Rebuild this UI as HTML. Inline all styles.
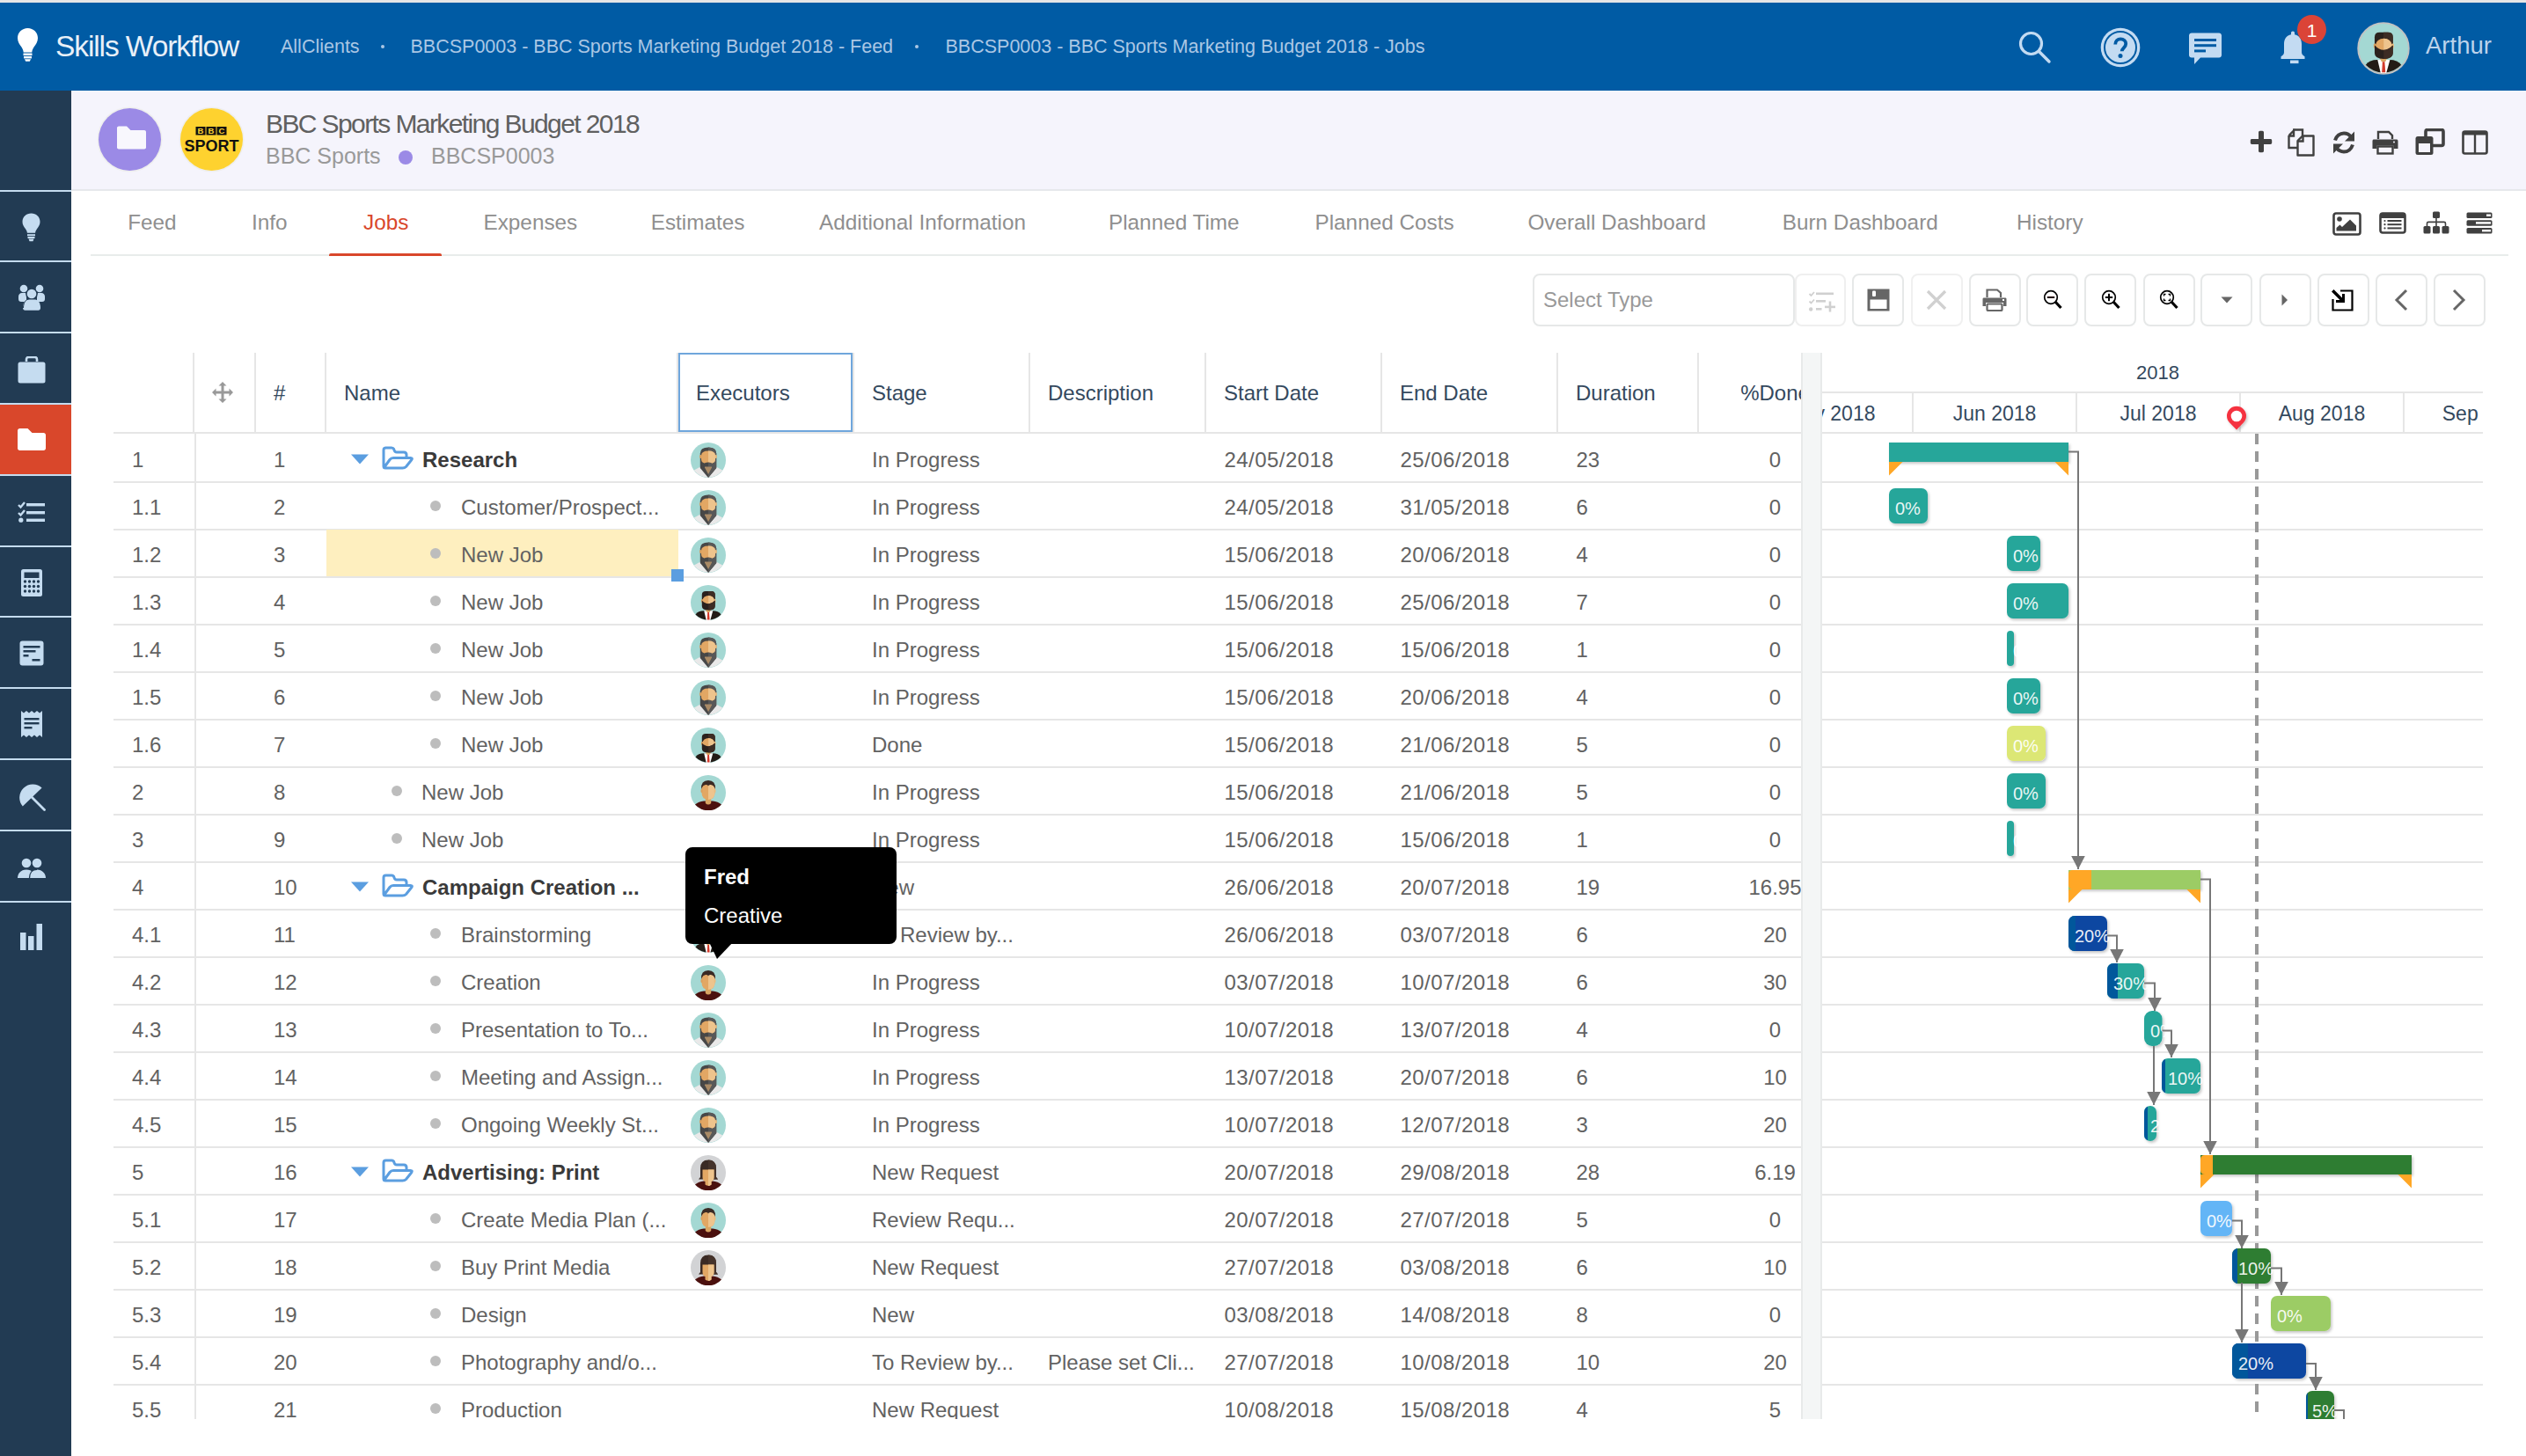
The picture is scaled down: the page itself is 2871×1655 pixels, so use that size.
<!DOCTYPE html>
<html><head><meta charset="utf-8"><title>Skills Workflow - Jobs</title>
<style>
html,body{margin:0;padding:0;}
body{width:2871px;height:1655px;overflow:hidden;position:relative;background:#fff;font-family:"Liberation Sans", sans-serif;}
.t{position:absolute;white-space:nowrap;line-height:1;}
svg{display:block;}
</style></head><body>
<div style="position:absolute;left:0px;top:0px;width:2871px;height:3px;background:#e6e6e6;"></div>
<div style="position:absolute;left:0px;top:3px;width:2871px;height:100px;background:#005ba4;"></div>
<svg style="position:absolute;left:19px;top:31px;" width="25" height="40" viewBox="0 0 25 40"><path d="M12.5 1C5.9 1 1 6 1 12.2c0 4.4 2.4 7.3 4.3 10 1.3 1.9 2.2 3.9 2.4 6.3h9.6c.2-2.4 1.1-4.4 2.4-6.3 1.9-2.7 4.3-5.6 4.3-10C24 6 19.1 1 12.5 1z" fill="#fff"/><rect x="7.5" y="29.5" width="10" height="2.6" fill="#fff"/><rect x="8" y="33" width="9" height="2.4" fill="#fff"/><path d="M9 36.2h7l-1.2 2.6h-4.6z" fill="#fff"/></svg>
<div class="t" style="left:63px;top:35.6px;font-size:33.5px;color:#e8f0f8;letter-spacing:-1.1px;">Skills Workflow</div>
<div class="t" style="left:319px;top:43.3px;font-size:21.5px;color:#abc7e4;">AllClients</div>
<div style="position:absolute;left:433px;top:51px;width:4px;height:4px;background:#abc7e4;border-radius:50%;"></div>
<div class="t" style="left:466.5px;top:43.3px;font-size:21.5px;color:#abc7e4;">BBCSP0003 - BBC Sports Marketing Budget 2018 - Feed</div>
<div style="position:absolute;left:1040px;top:51px;width:4px;height:4px;background:#abc7e4;border-radius:50%;"></div>
<div class="t" style="left:1074.5px;top:43.3px;font-size:21.5px;color:#abc7e4;">BBCSP0003 - BBC Sports Marketing Budget 2018 - Jobs</div>
<svg style="position:absolute;left:2293px;top:34px;" width="40" height="40" viewBox="0 0 40 40"><circle cx="15.5" cy="15.5" r="12" fill="none" stroke="#c3dbf2" stroke-width="3.2"/><line x1="24.5" y1="24.5" x2="36" y2="36" stroke="#c3dbf2" stroke-width="3.4" stroke-linecap="round"/></svg>
<svg style="position:absolute;left:2387px;top:31px;" width="46" height="46" viewBox="0 0 46 46"><circle cx="23" cy="23" r="22.3" fill="#c3dbf2"/><circle cx="23" cy="23" r="18" fill="none" stroke="#005ba4" stroke-width="2"/><path d="M17.2 19.5c0-3.6 2.6-6.2 6-6.2 3.5 0 6 2.4 6 5.5 0 4.3-4.5 4.6-4.5 8.5" fill="none" stroke="#005ba4" stroke-width="3.8"/><circle cx="23" cy="32.6" r="2.5" fill="#005ba4"/></svg>
<svg style="position:absolute;left:2488px;top:36px;" width="40" height="38" viewBox="0 0 40 38"><path d="M3 1.5h31c1.7 0 3 1.3 3 3v22c0 1.7-1.3 3-3 3H13l-7 7.5v-7.5H3c-1.7 0-3-1.3-3-3v-22c0-1.7 1.3-3 3-3z" fill="#c3dbf2"/><rect x="6" y="8" width="25" height="3" fill="#005ba4"/><rect x="6" y="14.2" width="25" height="3" fill="#005ba4"/><rect x="6" y="20.4" width="13" height="3" fill="#005ba4"/></svg>
<svg style="position:absolute;left:2589px;top:34px;" width="34" height="40" viewBox="0 0 34 40"><path d="M17 1.5c1.3 0 2 .8 2 2v1.7c5 1 8 5 8 10.7v9.5c0 2 1.5 3.5 3.5 4.8V33H3.5v-2.8C5.5 28.9 7 27.4 7 25.4v-9.5C7 10.2 10 6.2 15 5.2V3.5c0-1.2.7-2 2-2z" fill="#c3dbf2"/><rect x="14" y="34.5" width="9.5" height="3.6" fill="#c3dbf2"/></svg>
<div style="position:absolute;left:2611px;top:17px;width:33px;height:33px;background:#db4437;border-radius:50%;"></div>
<div class="t" style="left:2612.5px;width:30px;text-align:center;top:24.2px;font-size:21px;color:#fff;">1</div>
<div style="position:absolute;left:0px;top:103px;width:81px;height:1552px;background:#223b53;"></div>
<div style="position:absolute;left:0px;top:215.5px;width:81px;height:2px;background:#c5dcef;"></div>
<div style="position:absolute;left:0px;top:296px;width:81px;height:2px;background:#c5dcef;"></div>
<div style="position:absolute;left:0px;top:377px;width:81px;height:2px;background:#c5dcef;"></div>
<div style="position:absolute;left:0px;top:458px;width:81px;height:2px;background:#c5dcef;"></div>
<div style="position:absolute;left:0px;top:538.5px;width:81px;height:2px;background:#c5dcef;"></div>
<div style="position:absolute;left:0px;top:619.5px;width:81px;height:2px;background:#c5dcef;"></div>
<div style="position:absolute;left:0px;top:700px;width:81px;height:2px;background:#c5dcef;"></div>
<div style="position:absolute;left:0px;top:781px;width:81px;height:2px;background:#c5dcef;"></div>
<div style="position:absolute;left:0px;top:862px;width:81px;height:2px;background:#c5dcef;"></div>
<div style="position:absolute;left:0px;top:942.5px;width:81px;height:2px;background:#c5dcef;"></div>
<div style="position:absolute;left:0px;top:1023.5px;width:81px;height:2px;background:#c5dcef;"></div>
<div style="position:absolute;left:0px;top:460px;width:81px;height:78.5px;background:#d9472b;"></div>
<svg style="position:absolute;left:25px;top:242px;" width="21" height="33" viewBox="0 0 21 33"><path d="M10.5 .5C4.9.5.5 4.6.5 10c0 3.6 1.8 5.8 3.4 8 1 1.5 1.9 3 2 4.8h9.2c.1-1.8 1-3.3 2-4.8 1.6-2.2 3.4-4.4 3.4-8C20.5 4.6 16.1.5 10.5.5z" fill="#c5dcf0"/><rect x="6" y="24.2" width="9" height="2" fill="#c5dcf0"/><rect x="6.5" y="27" width="8" height="2" fill="#c5dcf0"/><path d="M7.5 29.6h6l-1 2.7h-4z" fill="#c5dcf0"/></svg>
<svg style="position:absolute;left:20px;top:323px;" width="32" height="31" viewBox="0 0 32 31"><circle cx="7" cy="5" r="4.3" fill="#c5dcf0"/><circle cx="25" cy="5" r="4.3" fill="#c5dcf0"/><path d="M1 14c0-2 1.5-4 4-4h4l1 5v5H4c-1.8 0-3-1-3-3z M31 14c0-2-1.5-4-4-4h-4l-1 5v5h6c1.8 0 3-1 3-3z" fill="#c5dcf0"/><circle cx="16" cy="11" r="6.3" fill="#223b53"/><circle cx="16" cy="11" r="5.3" fill="#c5dcf0"/><path d="M6 27c0-6 3-9.5 6-9.5h8c3 0 6 3.5 6 9.5 0 1.5-1 2.8-2.5 2.8h-15C7 29.8 6 28.5 6 27z" fill="#c5dcf0"/><path d="M6.5 27c0-6 3-9.8 6-9.8" fill="none" stroke="#223b53" stroke-width="1"/></svg>
<svg style="position:absolute;left:20px;top:405px;" width="32" height="31" viewBox="0 0 32 31"><path d="M10 6V3.5C10 2 11 1 12.5 1h7C21 1 22 2 22 3.5V6" fill="none" stroke="#c5dcf0" stroke-width="2.6"/><rect x="0.5" y="6.5" width="31" height="24" rx="2.5" fill="#c5dcf0"/></svg>
<svg style="position:absolute;left:20px;top:486px;" width="32" height="27" viewBox="0 0 32 27"><path d="M2.5 1h9l5 5h13c1.4 0 2.5 1.1 2.5 2.5v15c0 1.4-1.1 2.5-2.5 2.5h-27C1.1 26 0 24.9 0 23.5v-20C0 2.1 1.1 1 2.5 1z" fill="#fff"/></svg>
<svg style="position:absolute;left:20px;top:569px;" width="32" height="26" viewBox="0 0 32 26"><path d="M1 5l2.5 2.5L8 2" fill="none" stroke="#c5dcf0" stroke-width="2.4"/><path d="M1 14l2.5 2.5L8 11" fill="none" stroke="#c5dcf0" stroke-width="2.4"/><circle cx="3.8" cy="22.2" r="2.6" fill="#c5dcf0"/><rect x="10" y="3" width="21" height="3.4" fill="#c5dcf0"/><rect x="10" y="12" width="21" height="3.4" fill="#c5dcf0"/><rect x="10" y="20.6" width="21" height="3.4" fill="#c5dcf0"/></svg>
<svg style="position:absolute;left:23px;top:646px;" width="26" height="33" viewBox="0 0 26 33"><rect x="1" y="1" width="24" height="31" rx="2.5" fill="#c5dcf0"/><rect x="4.5" y="4.5" width="17" height="6.5" fill="#223b53"/><circle cx="5.5" cy="15.0" r="1.7" fill="#223b53"/><circle cx="10.5" cy="15.0" r="1.7" fill="#223b53"/><circle cx="15.5" cy="15.0" r="1.7" fill="#223b53"/><circle cx="20.5" cy="15.0" r="1.7" fill="#223b53"/><circle cx="5.5" cy="20.5" r="1.7" fill="#223b53"/><circle cx="10.5" cy="20.5" r="1.7" fill="#223b53"/><circle cx="15.5" cy="20.5" r="1.7" fill="#223b53"/><circle cx="20.5" cy="20.5" r="1.7" fill="#223b53"/><circle cx="5.5" cy="26.0" r="1.7" fill="#223b53"/><circle cx="10.5" cy="26.0" r="1.7" fill="#223b53"/><circle cx="15.5" cy="26.0" r="1.7" fill="#223b53"/><circle cx="20.5" cy="26.0" r="1.7" fill="#223b53"/></svg>
<svg style="position:absolute;left:22px;top:728px;" width="28" height="29" viewBox="0 0 28 29"><rect x="0.5" y="0.5" width="27" height="28" rx="3" fill="#c5dcf0"/><rect x="4.5" y="6" width="19" height="2.5" fill="#223b53"/><rect x="4.5" y="11" width="14" height="2.5" fill="#223b53"/><rect x="4.5" y="16" width="6" height="2.5" fill="#223b53"/><rect x="14.5" y="21" width="9" height="2.5" fill="#223b53"/></svg>
<svg style="position:absolute;left:23px;top:807px;" width="26" height="32" viewBox="0 0 26 32"><path d="M1 1l3 2.5 3-2.5 3 2.5 3-2.5 3 2.5 3-2.5 3 2.5 3-2.5V31l-3-2.5-3 2.5-3-2.5-3 2.5-3-2.5-3 2.5-3-2.5-3 2.5z" fill="#c5dcf0"/><rect x="4.5" y="9" width="17" height="2.4" fill="#223b53"/><rect x="4.5" y="14" width="17" height="2.4" fill="#223b53"/><rect x="4.5" y="19" width="9" height="2.4" fill="#223b53"/></svg>
<svg style="position:absolute;left:20px;top:890px;" width="32" height="32" viewBox="0 0 32 32"><path d="M27.6 5.5A15.2 15.2 0 0 0 5.8 26.6Z" fill="#c5dcf0"/><line x1="16" y1="16" x2="30.5" y2="30.5" stroke="#c5dcf0" stroke-width="2.8" stroke-linecap="round"/></svg>
<svg style="position:absolute;left:20px;top:975px;" width="32" height="24" viewBox="0 0 32 24"><circle cx="10" cy="6" r="5.3" fill="#c5dcf0"/><circle cx="22" cy="6" r="5.3" fill="#c5dcf0"/><path d="M0 23c0-5 3.5-9.5 10-9.5S20 18 20 23z" fill="#c5dcf0"/><path d="M14 23c0-5 2-9.5 8-9.5s10 4.5 10 9.5z" fill="#c5dcf0"/><path d="M13.5 23c0-5 2.5-9.6 8.5-9.6" fill="none" stroke="#223b53" stroke-width="1.3"/></svg>
<svg style="position:absolute;left:23px;top:1050px;" width="26" height="30" viewBox="0 0 26 30"><rect x="0" y="10" width="6.5" height="20" fill="#c5dcf0"/><rect x="9" y="14" width="6.5" height="16" fill="#c5dcf0"/><rect x="18.5" y="0" width="6.5" height="30" fill="#c5dcf0"/></svg>
<div style="position:absolute;left:81px;top:103px;width:2790px;height:112px;background:#f5f4fc;"></div>
<div style="position:absolute;left:81px;top:215px;width:2790px;height:2px;background:#e6e8ec;"></div>
<div style="position:absolute;left:112px;top:122.5px;width:71px;height:71px;background:#9b8ae6;border-radius:50%;box-shadow:0 0 0 1.5px #eeeeee;"></div>
<svg style="position:absolute;left:132.5px;top:142.5px;" width="33" height="27" viewBox="0 0 33 27"><path d="M2 .5h9l4.5 4.5H31c1.1 0 2 .9 2 2v17.5c0 1.1-.9 2-2 2H2c-1.1 0-2-.9-2-2v-22C0 1.4.9.5 2 .5z" fill="#f8f7fd"/></svg>
<div style="position:absolute;left:204.5px;top:122.5px;width:71px;height:71px;background:#fed22f;border-radius:50%;box-shadow:0 0 0 1.5px #eeeeee;"></div>
<svg style="position:absolute;left:206px;top:140px;" width="70" height="36" viewBox="0 0 70 36"><rect x="16.5" y="4" width="11" height="9.5" fill="#111"/><rect x="28.5" y="4" width="11" height="9.5" fill="#111"/><rect x="40.5" y="4" width="11" height="9.5" fill="#111"/><text x="22" y="12.4" font-family="Liberation Sans" font-weight="700" font-size="9.5" fill="#fed22f" text-anchor="middle">B</text><text x="34" y="12.4" font-family="Liberation Sans" font-weight="700" font-size="9.5" fill="#fed22f" text-anchor="middle">B</text><text x="46" y="12.4" font-family="Liberation Sans" font-weight="700" font-size="9.5" fill="#fed22f" text-anchor="middle">C</text><text x="34.5" y="32" font-family="Liberation Sans" font-weight="700" font-size="18" fill="#111" text-anchor="middle">SPORT</text></svg>
<div class="t" style="left:302px;top:125.9px;font-size:30px;color:#606060;letter-spacing:-1.6px;">BBC Sports Marketing Budget 2018</div>
<div class="t" style="left:302px;top:165.2px;font-size:25px;color:#999;">BBC Sports</div>
<div style="position:absolute;left:453px;top:171px;width:16px;height:16px;background:#9b8ae6;border-radius:50%;"></div>
<div class="t" style="left:490px;top:165.2px;font-size:25px;color:#999;">BBCSP0003</div>
<svg style="position:absolute;left:2557px;top:148px;" width="26" height="26" viewBox="0 0 26 26"><path d="M10 2.5c0-1 .7-1.7 1.7-1.7h2.6c1 0 1.7.7 1.7 1.7V10h7.5c1 0 1.7.7 1.7 1.7v2.6c0 1-.7 1.7-1.7 1.7H16v7.5c0 1-.7 1.7-1.7 1.7h-2.6c-1 0-1.7-.7-1.7-1.7V16H2.5C1.5 16 .8 15.3.8 14.3v-2.6c0-1 .7-1.7 1.7-1.7H10z" fill="#404040"/></svg>
<svg style="position:absolute;left:2600px;top:146px;" width="33" height="32" viewBox="0 0 33 32"><path d="M6 1.5h11v6.5 M17 1.5v0 M1.5 8L7 2.5v6h-5.5 M1.5 8v14h10" fill="none" stroke="#404040" stroke-width="2.4"/><path d="M11.5 14L17 8.5h12.5v22h-18z" fill="none" stroke="#404040" stroke-width="2.4" stroke-linejoin="round"/><path d="M11.5 14.5h6v-6" fill="none" stroke="#404040" stroke-width="2.4"/></svg>
<svg style="position:absolute;left:2650px;top:148px;" width="28" height="28" viewBox="0 0 28 28"><path d="M4 11.5C5.5 6.5 9.5 3.5 14 3.5c3.5 0 6.5 1.7 8.3 4.3" fill="none" stroke="#404040" stroke-width="4"/><path d="M26 1.5v11h-11z" fill="#404040"/><path d="M24 16.5C22.5 21.5 18.5 24.5 14 24.5c-3.5 0-6.5-1.7-8.3-4.3" fill="none" stroke="#404040" stroke-width="4"/><path d="M2 26.5v-11h11z" fill="#404040"/></svg>
<svg style="position:absolute;left:2696px;top:148px;" width="30" height="28" viewBox="0 0 30 28"><path d="M7 10V2h12l4 4v4" fill="none" stroke="#404040" stroke-width="2.4"/><path d="M2.5 10.5h25c1.4 0 2 .6 2 2V21h-5v-3.5h-19V21h-5v-8.5c0-1.4.6-2 2-2z" fill="#404040"/><rect x="6.5" y="18.5" width="17" height="8" fill="none" stroke="#404040" stroke-width="2.4"/><circle cx="25" cy="13.5" r="1" fill="#f5f4fc"/></svg>
<svg style="position:absolute;left:2744px;top:146px;" width="36" height="32" viewBox="0 0 36 32"><rect x="13" y="1.5" width="20" height="18" rx="2" fill="none" stroke="#404040" stroke-width="3.6"/><rect x="1.5" y="9" width="20" height="21" rx="2.5" fill="#404040"/><rect x="5" y="17" width="13" height="10" fill="#f5f4fc"/></svg>
<svg style="position:absolute;left:2798px;top:148px;" width="30" height="28" viewBox="0 0 30 28"><rect x="1.5" y="1.5" width="27" height="25" rx="2" fill="none" stroke="#404040" stroke-width="2.6"/><rect x="1.5" y="1.5" width="27" height="4" fill="#404040"/><line x1="15" y1="3" x2="15" y2="26" stroke="#404040" stroke-width="2.4"/></svg>
<div style="position:absolute;left:103px;top:289px;width:2748px;height:2px;background:#e8eceb;"></div>
<div class="t" style="left:145.2px;top:240.6px;font-size:24.3px;color:#8f8f8f;">Feed</div>
<div class="t" style="left:286px;top:240.6px;font-size:24.3px;color:#8f8f8f;">Info</div>
<div class="t" style="left:413px;top:240.6px;font-size:24.3px;color:#d9472b;">Jobs</div>
<div class="t" style="left:549.5px;top:240.6px;font-size:24.3px;color:#8f8f8f;">Expenses</div>
<div class="t" style="left:739.7px;top:240.6px;font-size:24.3px;color:#8f8f8f;">Estimates</div>
<div class="t" style="left:931px;top:240.6px;font-size:24.3px;color:#8f8f8f;">Additional Information</div>
<div class="t" style="left:1260px;top:240.6px;font-size:24.3px;color:#8f8f8f;">Planned Time</div>
<div class="t" style="left:1494.5px;top:240.6px;font-size:24.3px;color:#8f8f8f;">Planned Costs</div>
<div class="t" style="left:1736.4px;top:240.6px;font-size:24.3px;color:#8f8f8f;">Overall Dashboard</div>
<div class="t" style="left:2025.8px;top:240.6px;font-size:24.3px;color:#8f8f8f;">Burn Dashboard</div>
<div class="t" style="left:2292px;top:240.6px;font-size:24.3px;color:#8f8f8f;">History</div>
<div style="position:absolute;left:374px;top:288px;width:128px;height:3px;background:#d9472b;border-radius:2px 2px 0 0;"></div>
<svg style="position:absolute;left:2651px;top:241px;" width="33" height="27" viewBox="0 0 33 27"><rect x="1.5" y="1.5" width="30" height="24" rx="2.5" fill="none" stroke="#404040" stroke-width="2.6"/><circle cx="8" cy="8" r="2.8" fill="#404040"/><path d="M4.5 21.5v-3.5l4-3.5 2.5 2.5 9-8.5 7 7v6z" fill="#404040"/></svg>
<svg style="position:absolute;left:2704px;top:241px;" width="31" height="25" viewBox="0 0 31 25"><rect x="1.5" y="1.5" width="28" height="22" rx="2.5" fill="none" stroke="#404040" stroke-width="2.6"/><rect x="1.5" y="1.5" width="28" height="5.5" fill="#404040"/><circle cx="6.5" cy="10.0" r="1.1" fill="#404040"/><rect x="9.5" y="9.0" width="16" height="2" fill="#404040"/><circle cx="6.5" cy="14.2" r="1.1" fill="#404040"/><rect x="9.5" y="13.2" width="16" height="2" fill="#404040"/><circle cx="6.5" cy="18.4" r="1.1" fill="#404040"/><rect x="9.5" y="17.4" width="16" height="2" fill="#404040"/></svg>
<svg style="position:absolute;left:2754px;top:240px;" width="30" height="26" viewBox="0 0 30 26"><rect x="11" y="0.5" width="8" height="7.5" rx="1.5" fill="#404040"/><rect x="0.5" y="17" width="8" height="8.5" rx="1.5" fill="#404040"/><rect x="11" y="17" width="8" height="8.5" rx="1.5" fill="#404040"/><rect x="21.5" y="17" width="8" height="8.5" rx="1.5" fill="#404040"/><path d="M15 8v9 M4.5 17v-3c0-1 .6-1.6 1.6-1.6h17.8c1 0 1.6.6 1.6 1.6v3" fill="none" stroke="#404040" stroke-width="1.6"/></svg>
<svg style="position:absolute;left:2803px;top:241px;" width="30" height="25" viewBox="0 0 30 25"><rect x="0.5" y="0.5" width="29" height="6.5" rx="1.5" fill="#404040"/><rect x="0.5" y="9.2" width="29" height="6.5" rx="1.5" fill="#404040"/><rect x="0.5" y="18" width="29" height="6.5" rx="1.5" fill="#404040"/><rect x="23" y="2.5" width="5" height="2.4" fill="#fff"/><rect x="11" y="11.2" width="17" height="2.4" fill="#fff"/><rect x="18" y="20" width="10" height="2.4" fill="#fff"/></svg>
<div style="position:absolute;left:1742px;top:311px;width:298px;height:60px;background:#fff;box-sizing:border-box;border:2px solid #e6e8e8;border-radius:8px;"></div>
<div class="t" style="left:1754px;top:328.7px;font-size:24px;color:#999;">Select Type</div>
<div style="position:absolute;left:2040px;top:311px;width:58px;height:60px;background:#fff;box-sizing:border-box;border:2px solid #efefef;border-radius:8px;"></div>
<svg style="position:absolute;left:2055px;top:330px;" width="32" height="25" viewBox="0 0 32 25"><path d="M1.5 4l2 2 3.5-4" fill="none" stroke="#d0d0d0" stroke-width="1.8"/><path d="M1.5 12.5l2 2 3.5-4" fill="none" stroke="#d0d0d0" stroke-width="1.8"/><circle cx="3.2" cy="21.5" r="2.2" fill="#d0d0d0"/><rect x="9" y="2.5" width="20" height="2.6" fill="#d0d0d0"/><rect x="9" y="11" width="11" height="2.6" fill="#d0d0d0"/><rect x="9" y="20" width="6.5" height="2.6" fill="#d0d0d0"/><rect x="19" y="17.6" width="12" height="2.6" fill="#d0d0d0"/><rect x="23.7" y="12.5" width="2.6" height="12" fill="#d0d0d0"/></svg>
<div style="position:absolute;left:2105px;top:311px;width:59px;height:60px;background:#fff;box-sizing:border-box;border:2px solid #e6e8e8;border-radius:8px;"></div>
<div style="position:absolute;left:2172px;top:311px;width:59px;height:60px;background:#fff;box-sizing:border-box;border:2px solid #f0f0f0;border-radius:8px;"></div>
<div style="position:absolute;left:2238px;top:311px;width:59px;height:60px;background:#fff;box-sizing:border-box;border:2px solid #e6e8e8;border-radius:8px;"></div>
<div style="position:absolute;left:2303px;top:311px;width:59px;height:60px;background:#fff;box-sizing:border-box;border:2px solid #e6e8e8;border-radius:8px;"></div>
<div style="position:absolute;left:2369px;top:311px;width:59px;height:60px;background:#fff;box-sizing:border-box;border:2px solid #e6e8e8;border-radius:8px;"></div>
<div style="position:absolute;left:2436px;top:311px;width:59px;height:60px;background:#fff;box-sizing:border-box;border:2px solid #e6e8e8;border-radius:8px;"></div>
<div style="position:absolute;left:2501px;top:311px;width:59px;height:60px;background:#fff;box-sizing:border-box;border:2px solid #e6e8e8;border-radius:8px;"></div>
<div style="position:absolute;left:2568px;top:311px;width:59px;height:60px;background:#fff;box-sizing:border-box;border:2px solid #e6e8e8;border-radius:8px;"></div>
<div style="position:absolute;left:2634px;top:311px;width:59px;height:60px;background:#fff;box-sizing:border-box;border:2px solid #e6e8e8;border-radius:8px;"></div>
<div style="position:absolute;left:2700px;top:311px;width:59px;height:60px;background:#fff;box-sizing:border-box;border:2px solid #e6e8e8;border-radius:8px;"></div>
<div style="position:absolute;left:2766px;top:311px;width:59px;height:60px;background:#fff;box-sizing:border-box;border:2px solid #e6e8e8;border-radius:8px;"></div>
<svg style="position:absolute;left:2122px;top:328px;" width="26" height="26" viewBox="0 0 26 26"><rect x="0.5" y="0.5" width="25" height="25" fill="#666"/><rect x="3.5" y="12.5" width="19" height="10.5" fill="#fff"/><rect x="6" y="2.5" width="4" height="6.5" rx="1.2" fill="#fff"/></svg>
<svg style="position:absolute;left:2189px;top:329px;" width="24" height="24" viewBox="0 0 24 24"><path d="M2 2l20 20M22 2L2 22" stroke="#d0d0d0" stroke-width="3.2"/></svg>
<svg style="position:absolute;left:2253px;top:328px;" width="28" height="26" viewBox="0 0 28 26"><path d="M5.5 10V1.5h11.5l4 3.5V10" fill="none" stroke="#666" stroke-width="2.2"/><path d="M2 10.5h24c1 0 1.5.5 1.5 1.5V20h-3.5v-4h-20v4H.5v-8c0-1 .5-1.5 1.5-1.5z" fill="#666"/><rect x="5.5" y="17.5" width="17" height="7.5" rx="1" fill="none" stroke="#666" stroke-width="2.2"/><rect x="23" y="12" width="2" height="2" fill="#fff"/></svg>
<svg style="position:absolute;left:2320.5px;top:327px;" width="24" height="26" viewBox="0 0 24 26"><circle cx="10" cy="11" r="7.3" fill="none" stroke="#000" stroke-width="1.7"/><line x1="15" y1="16" x2="21.5" y2="23" stroke="#000" stroke-width="3.2"/><rect x="5.8" y="10" width="8.4" height="2" fill="#200"/></svg>
<svg style="position:absolute;left:2386.5px;top:327px;" width="24" height="26" viewBox="0 0 24 26"><circle cx="10" cy="11" r="7.3" fill="none" stroke="#000" stroke-width="1.7"/><line x1="15" y1="16" x2="21.5" y2="23" stroke="#000" stroke-width="3.2"/><rect x="5.8" y="10" width="8.4" height="2" fill="#000"/><rect x="9" y="6.8" width="2" height="8.4" fill="#000"/></svg>
<svg style="position:absolute;left:2452.5px;top:327px;" width="24" height="26" viewBox="0 0 24 26"><circle cx="10" cy="11" r="7.3" fill="none" stroke="#000" stroke-width="1.7"/><line x1="15" y1="16" x2="21.5" y2="23" stroke="#000" stroke-width="3.2"/><path d="M6.5 9.5V7.5h2 M11.5 7.5h2v2 M13.5 12.5v2h-2 M8.5 14.5h-2v-2" fill="none" stroke="#000" stroke-width="1.3"/></svg>
<svg style="position:absolute;left:2524px;top:337px;" width="14" height="8" viewBox="0 0 14 8"><path d="M0.5 0.5h13L7 7.5z" fill="#666"/></svg>
<svg style="position:absolute;left:2593px;top:334px;" width="8" height="14" viewBox="0 0 8 14"><path d="M0.5 0.5v13L7 7z" fill="#666"/></svg>
<svg style="position:absolute;left:2649px;top:328px;" width="28" height="26" viewBox="0 0 28 26"><path d="M11 2.5h13.5v22h-22V12" fill="none" stroke="#000" stroke-width="2.2"/><path d="M1 3.5L3.5 1l9.5 9.5V6h3v10H6v-3h4.5z" fill="#000"/></svg>
<svg style="position:absolute;left:2720px;top:328px;" width="18" height="26" viewBox="0 0 18 26"><path d="M15 2L4 13l11 11" fill="none" stroke="#666" stroke-width="3"/></svg>
<svg style="position:absolute;left:2786px;top:328px;" width="18" height="26" viewBox="0 0 18 26"><path d="M3 2l11 11L3 24" fill="none" stroke="#666" stroke-width="3"/></svg>
<svg width="0" height="0" style="position:absolute"><defs>
<symbol id="avA" viewBox="0 0 40 40"><circle cx="20" cy="20" r="20" fill="#a4d8d3"/>
<path d="M3.8 31.5L12 27H28L36.2 31.5A20 20 0 0 1 3.8 31.5z" fill="#e9e9e9"/>
<path d="M10.8 12.5Q10.8 5.5 20 5.5Q29.2 5.5 29.2 12.5V29L20 40L10.8 29z" fill="#474747"/>
<path d="M20 5.5Q29.2 5.5 29.2 12.5V29L20 40z" fill="#585858"/>
<path d="M12 15Q12 9.5 20 9.5Q28 9.5 28 15V19Q28 22.5 24.5 23.5Q20 21.5 15.5 23.5Q12 22.5 12 19z" fill="#e2a764"/>
<path d="M20 9.5Q28 9.5 28 15V19Q28 22.5 24.5 23.5Q22 22 20 22z" fill="#eec48d"/>
<rect x="10.2" y="14" width="2" height="4" rx="1" fill="#d9a060"/><rect x="27.8" y="14" width="2" height="4" rx="1" fill="#e9bb80"/>
<path d="M16 28.5L20 36L24 28.5V27.5H16z" fill="#a98a66"/>
</symbol>
<symbol id="avB" viewBox="0 0 40 40"><circle cx="20" cy="20" r="20" fill="#a4d8d3"/>
<path d="M5.5 33.5Q8.5 29.3 15 29.3H25Q31.5 29.3 34.5 33.5A20 20 0 0 1 5.5 33.5z" fill="#231b16"/>
<path d="M15.2 29.3H25.3L22.3 40H17.7z" fill="#fff"/><path d="M16.5 27H23.5L21.5 31H18.5z" fill="#d9a563"/><path d="M19.2 31H21L21.6 39.5H18.7z" fill="#d33a2c"/>
<path d="M12.8 19V10.8Q12.8 7 17 7H23.5Q27.7 7 27.7 10.8V19z" fill="#2a211d"/><path d="M20 7H23.5Q27.7 7 27.7 10.8V19H20z" fill="#3d2c24"/>
<rect x="12" y="16" width="2" height="4" rx="1" fill="#d9a060"/><rect x="26.5" y="16" width="2" height="4" rx="1" fill="#e9bb80"/>
<ellipse cx="20.2" cy="17.3" rx="6.6" ry="5.3" fill="#e2a764"/>
<path d="M20.2 12A6.6 5.3 0 0 1 20.2 22.6z" fill="#eec48d"/>
<path d="M12.8 17.5Q20 25 27.7 17.5V24Q27.7 28.6 20.2 28.6Q12.8 28.6 12.8 24z" fill="#2a211d"/><path d="M20.2 21.5Q24.5 21 27.7 17.5V24Q27.7 28.6 20.2 28.6z" fill="#3d2c24"/>
</symbol>
<symbol id="avC" viewBox="0 0 40 40"><circle cx="20" cy="20" r="20" fill="#a4d8d3"/>
<path d="M5 33.5Q9 30 15 29.5H25Q31 30 35 33.5A20 20 0 0 1 5 33.5z" fill="#4b100e"/>
<path d="M16.8 25H23.2V32Q20 35 16.8 32z" fill="#d9a563"/>
<path d="M12.5 14Q12.5 9 20 9Q27.5 9 27.5 14V20Q27.5 27.5 20 28Q12.5 27.5 12.5 20z" fill="#e2a764"/>
<path d="M20 9Q27.5 9 27.5 14V20Q27.5 27.5 20 28z" fill="#eec48d"/>
<rect x="11.5" y="16" width="2" height="4" rx="1" fill="#d9a060"/><rect x="26.5" y="16" width="2" height="4" rx="1" fill="#e9bb80"/>
<path d="M12 16Q11.5 6 20 6Q28.5 6 28 16L27 14Q26 11.5 23 11Q20.5 10.5 20 12.5Q19.5 10.5 17 11Q14 11.5 13 14z" fill="#3a2a24"/>
</symbol>
<symbol id="avD" viewBox="0 0 40 40"><circle cx="20" cy="20" r="20" fill="#d2d3d5"/>
<path d="M11 15Q11 5.5 20 5.5Q29 5.5 29 15V25L31 27.5H9L11 25z" fill="#3a2a24"/>
<path d="M20 5.5Q29 5.5 29 15V25L31 27.5H20z" fill="#45332b"/>
<path d="M5 33.5Q9 30 15 29.5H25Q31 30 35 33.5A20 20 0 0 1 5 33.5z" fill="#4b100e"/>
<path d="M13.5 16.5H26.5V25Q26.5 29 23.5 30V33.5Q20 36 16.5 33.5V30Q13.5 29 13.5 25z" fill="#e2a764"/>
<path d="M20 16.5H26.5V25Q26.5 29 23.5 30V33.5Q21.8 35 20 35z" fill="#eec48d"/>
</symbol>
</defs></svg>
<div style="position:absolute;left:219px;top:401px;width:2px;height:90px;background:#e6e6e6;"></div>
<div style="position:absolute;left:289px;top:401px;width:2px;height:90px;background:#e6e6e6;"></div>
<div style="position:absolute;left:369px;top:401px;width:2px;height:90px;background:#e6e6e6;"></div>
<div style="position:absolute;left:769px;top:401px;width:2px;height:90px;background:#e6e6e6;"></div>
<div style="position:absolute;left:969px;top:401px;width:2px;height:90px;background:#e6e6e6;"></div>
<div style="position:absolute;left:1169px;top:401px;width:2px;height:90px;background:#e6e6e6;"></div>
<div style="position:absolute;left:1369px;top:401px;width:2px;height:90px;background:#e6e6e6;"></div>
<div style="position:absolute;left:1569px;top:401px;width:2px;height:90px;background:#e6e6e6;"></div>
<div style="position:absolute;left:1769px;top:401px;width:2px;height:90px;background:#e6e6e6;"></div>
<div style="position:absolute;left:1929px;top:401px;width:2px;height:90px;background:#e6e6e6;"></div>
<div style="position:absolute;left:129px;top:491px;width:1918px;height:2px;background:#e6e6e6;"></div>
<svg style="position:absolute;left:241px;top:434px;" width="24" height="24" viewBox="0 0 24 24"><path d="M12 0l4.5 4.5h-3v6h6v-3L24 12l-4.5 4.5v-3h-6v6h3L12 24l-4.5-4.5h3v-6h-6v3L0 12l4.5-4.5v3h6v-6h-3z" fill="#999"/></svg>
<div class="t" style="left:311px;top:434.7px;font-size:24px;color:#34495e;">#</div>
<div class="t" style="left:391px;top:434.7px;font-size:24px;color:#34495e;">Name</div>
<div style="position:absolute;left:771px;top:401px;width:198px;height:90px;background:transparent;box-sizing:border-box;border:2px solid #6fa6dc;"></div>
<div class="t" style="left:791px;top:434.7px;font-size:24px;color:#34495e;">Executors</div>
<div class="t" style="left:991px;top:434.7px;font-size:24px;color:#34495e;">Stage</div>
<div class="t" style="left:1191px;top:434.7px;font-size:24px;color:#34495e;">Description</div>
<div class="t" style="left:1391px;top:434.7px;font-size:24px;color:#34495e;">Start Date</div>
<div class="t" style="left:1591px;top:434.7px;font-size:24px;color:#34495e;">End Date</div>
<div class="t" style="left:1791px;top:434.7px;font-size:24px;color:#34495e;">Duration</div>
<div style="position:absolute;left:129px;top:493px;width:1918px;height:1120px;overflow:hidden;">
<div style="position:absolute;left:0px;top:54px;width:1918px;height:2px;background:#e6e6e6;"></div>
<div class="t" style="left:21px;top:17.7px;font-size:24px;color:#626262;">1</div>
<div class="t" style="left:182px;top:17.7px;font-size:24px;color:#626262;">1</div>
<svg style="position:absolute;left:270px;top:23px" width="20" height="12"><path d="M0 0.5h20L10 11.5z" fill="#5b9ee0"/></svg>
<svg style="position:absolute;left:304px;top:13px" width="38" height="29"><path d="M3 24V5.5Q3 3 5.5 3H12Q14.5 3 15 5.5Q15.5 8 18 8H26Q29 8 29 11V14 M3.5 25.5L10 16.5Q11.5 14.5 14 14.5H33.5Q36.5 14.5 34.5 17L28.5 24.5Q27 26 24.5 26H5Q3 26 3 24" fill="none" stroke="#5b9ee0" stroke-width="3" stroke-linejoin="round" stroke-linecap="round"/></svg>
<div class="t" style="left:351px;top:17.7px;font-size:24px;color:#3a3a3a;font-weight:700;">Research</div>
<svg style="position:absolute;left:656px;top:10px" width="40" height="40"><use href="#avA"/></svg>
<div class="t" style="left:862px;top:17.7px;font-size:24px;color:#626262;">In Progress</div>
<div class="t" style="left:1262.5px;top:17.7px;font-size:24px;color:#626262;letter-spacing:0.45px;">24/05/2018</div>
<div class="t" style="left:1462.5px;top:17.7px;font-size:24px;color:#626262;letter-spacing:0.45px;">25/06/2018</div>
<div class="t" style="left:1662.5px;top:17.7px;font-size:24px;color:#626262;">23</div>
<div class="t" style="left:1828.5px;width:120px;text-align:center;top:17.7px;font-size:24px;color:#626262;">0</div>
<div style="position:absolute;left:0px;top:108px;width:1918px;height:2px;background:#e6e6e6;"></div>
<div class="t" style="left:21px;top:71.7px;font-size:24px;color:#626262;">1.1</div>
<div class="t" style="left:182px;top:71.7px;font-size:24px;color:#626262;">2</div>
<div style="position:absolute;left:360px;top:76px;width:12px;height:12px;background:#bdbdbd;border-radius:50%;"></div>
<div class="t" style="left:395px;top:71.7px;font-size:24px;color:#626262;">Customer/Prospect...</div>
<svg style="position:absolute;left:656px;top:64px" width="40" height="40"><use href="#avA"/></svg>
<div class="t" style="left:862px;top:71.7px;font-size:24px;color:#626262;">In Progress</div>
<div class="t" style="left:1262.5px;top:71.7px;font-size:24px;color:#626262;letter-spacing:0.45px;">24/05/2018</div>
<div class="t" style="left:1462.5px;top:71.7px;font-size:24px;color:#626262;letter-spacing:0.45px;">31/05/2018</div>
<div class="t" style="left:1662.5px;top:71.7px;font-size:24px;color:#626262;">6</div>
<div class="t" style="left:1828.5px;width:120px;text-align:center;top:71.7px;font-size:24px;color:#626262;">0</div>
<div style="position:absolute;left:242px;top:109px;width:400px;height:53px;background:#feefbf;"></div>
<div style="position:absolute;left:0px;top:162px;width:1918px;height:2px;background:#e6e6e6;"></div>
<div class="t" style="left:21px;top:125.7px;font-size:24px;color:#626262;">1.2</div>
<div class="t" style="left:182px;top:125.7px;font-size:24px;color:#626262;">3</div>
<div style="position:absolute;left:360px;top:130px;width:12px;height:12px;background:#bdbdbd;border-radius:50%;"></div>
<div class="t" style="left:395px;top:125.7px;font-size:24px;color:#626262;">New Job</div>
<svg style="position:absolute;left:656px;top:118px" width="40" height="40"><use href="#avA"/></svg>
<div class="t" style="left:862px;top:125.7px;font-size:24px;color:#626262;">In Progress</div>
<div class="t" style="left:1262.5px;top:125.7px;font-size:24px;color:#626262;letter-spacing:0.45px;">15/06/2018</div>
<div class="t" style="left:1462.5px;top:125.7px;font-size:24px;color:#626262;letter-spacing:0.45px;">20/06/2018</div>
<div class="t" style="left:1662.5px;top:125.7px;font-size:24px;color:#626262;">4</div>
<div class="t" style="left:1828.5px;width:120px;text-align:center;top:125.7px;font-size:24px;color:#626262;">0</div>
<div style="position:absolute;left:634px;top:154px;width:14px;height:14px;background:#5b9ee0;"></div>
<div style="position:absolute;left:0px;top:216px;width:1918px;height:2px;background:#e6e6e6;"></div>
<div class="t" style="left:21px;top:179.7px;font-size:24px;color:#626262;">1.3</div>
<div class="t" style="left:182px;top:179.7px;font-size:24px;color:#626262;">4</div>
<div style="position:absolute;left:360px;top:184px;width:12px;height:12px;background:#bdbdbd;border-radius:50%;"></div>
<div class="t" style="left:395px;top:179.7px;font-size:24px;color:#626262;">New Job</div>
<svg style="position:absolute;left:656px;top:172px" width="40" height="40"><use href="#avB"/></svg>
<div class="t" style="left:862px;top:179.7px;font-size:24px;color:#626262;">In Progress</div>
<div class="t" style="left:1262.5px;top:179.7px;font-size:24px;color:#626262;letter-spacing:0.45px;">15/06/2018</div>
<div class="t" style="left:1462.5px;top:179.7px;font-size:24px;color:#626262;letter-spacing:0.45px;">25/06/2018</div>
<div class="t" style="left:1662.5px;top:179.7px;font-size:24px;color:#626262;">7</div>
<div class="t" style="left:1828.5px;width:120px;text-align:center;top:179.7px;font-size:24px;color:#626262;">0</div>
<div style="position:absolute;left:0px;top:270px;width:1918px;height:2px;background:#e6e6e6;"></div>
<div class="t" style="left:21px;top:233.7px;font-size:24px;color:#626262;">1.4</div>
<div class="t" style="left:182px;top:233.7px;font-size:24px;color:#626262;">5</div>
<div style="position:absolute;left:360px;top:238px;width:12px;height:12px;background:#bdbdbd;border-radius:50%;"></div>
<div class="t" style="left:395px;top:233.7px;font-size:24px;color:#626262;">New Job</div>
<svg style="position:absolute;left:656px;top:226px" width="40" height="40"><use href="#avA"/></svg>
<div class="t" style="left:862px;top:233.7px;font-size:24px;color:#626262;">In Progress</div>
<div class="t" style="left:1262.5px;top:233.7px;font-size:24px;color:#626262;letter-spacing:0.45px;">15/06/2018</div>
<div class="t" style="left:1462.5px;top:233.7px;font-size:24px;color:#626262;letter-spacing:0.45px;">15/06/2018</div>
<div class="t" style="left:1662.5px;top:233.7px;font-size:24px;color:#626262;">1</div>
<div class="t" style="left:1828.5px;width:120px;text-align:center;top:233.7px;font-size:24px;color:#626262;">0</div>
<div style="position:absolute;left:0px;top:324px;width:1918px;height:2px;background:#e6e6e6;"></div>
<div class="t" style="left:21px;top:287.7px;font-size:24px;color:#626262;">1.5</div>
<div class="t" style="left:182px;top:287.7px;font-size:24px;color:#626262;">6</div>
<div style="position:absolute;left:360px;top:292px;width:12px;height:12px;background:#bdbdbd;border-radius:50%;"></div>
<div class="t" style="left:395px;top:287.7px;font-size:24px;color:#626262;">New Job</div>
<svg style="position:absolute;left:656px;top:280px" width="40" height="40"><use href="#avA"/></svg>
<div class="t" style="left:862px;top:287.7px;font-size:24px;color:#626262;">In Progress</div>
<div class="t" style="left:1262.5px;top:287.7px;font-size:24px;color:#626262;letter-spacing:0.45px;">15/06/2018</div>
<div class="t" style="left:1462.5px;top:287.7px;font-size:24px;color:#626262;letter-spacing:0.45px;">20/06/2018</div>
<div class="t" style="left:1662.5px;top:287.7px;font-size:24px;color:#626262;">4</div>
<div class="t" style="left:1828.5px;width:120px;text-align:center;top:287.7px;font-size:24px;color:#626262;">0</div>
<div style="position:absolute;left:0px;top:378px;width:1918px;height:2px;background:#e6e6e6;"></div>
<div class="t" style="left:21px;top:341.7px;font-size:24px;color:#626262;">1.6</div>
<div class="t" style="left:182px;top:341.7px;font-size:24px;color:#626262;">7</div>
<div style="position:absolute;left:360px;top:346px;width:12px;height:12px;background:#bdbdbd;border-radius:50%;"></div>
<div class="t" style="left:395px;top:341.7px;font-size:24px;color:#626262;">New Job</div>
<svg style="position:absolute;left:656px;top:334px" width="40" height="40"><use href="#avB"/></svg>
<div class="t" style="left:862px;top:341.7px;font-size:24px;color:#626262;">Done</div>
<div class="t" style="left:1262.5px;top:341.7px;font-size:24px;color:#626262;letter-spacing:0.45px;">15/06/2018</div>
<div class="t" style="left:1462.5px;top:341.7px;font-size:24px;color:#626262;letter-spacing:0.45px;">21/06/2018</div>
<div class="t" style="left:1662.5px;top:341.7px;font-size:24px;color:#626262;">5</div>
<div class="t" style="left:1828.5px;width:120px;text-align:center;top:341.7px;font-size:24px;color:#626262;">0</div>
<div style="position:absolute;left:0px;top:432px;width:1918px;height:2px;background:#e6e6e6;"></div>
<div class="t" style="left:21px;top:395.7px;font-size:24px;color:#626262;">2</div>
<div class="t" style="left:182px;top:395.7px;font-size:24px;color:#626262;">8</div>
<div style="position:absolute;left:316px;top:400px;width:12px;height:12px;background:#bdbdbd;border-radius:50%;"></div>
<div class="t" style="left:350px;top:395.7px;font-size:24px;color:#626262;">New Job</div>
<svg style="position:absolute;left:656px;top:388px" width="40" height="40"><use href="#avC"/></svg>
<div class="t" style="left:862px;top:395.7px;font-size:24px;color:#626262;">In Progress</div>
<div class="t" style="left:1262.5px;top:395.7px;font-size:24px;color:#626262;letter-spacing:0.45px;">15/06/2018</div>
<div class="t" style="left:1462.5px;top:395.7px;font-size:24px;color:#626262;letter-spacing:0.45px;">21/06/2018</div>
<div class="t" style="left:1662.5px;top:395.7px;font-size:24px;color:#626262;">5</div>
<div class="t" style="left:1828.5px;width:120px;text-align:center;top:395.7px;font-size:24px;color:#626262;">0</div>
<div style="position:absolute;left:0px;top:486px;width:1918px;height:2px;background:#e6e6e6;"></div>
<div class="t" style="left:21px;top:449.7px;font-size:24px;color:#626262;">3</div>
<div class="t" style="left:182px;top:449.7px;font-size:24px;color:#626262;">9</div>
<div style="position:absolute;left:316px;top:454px;width:12px;height:12px;background:#bdbdbd;border-radius:50%;"></div>
<div class="t" style="left:350px;top:449.7px;font-size:24px;color:#626262;">New Job</div>
<div class="t" style="left:862px;top:449.7px;font-size:24px;color:#626262;">In Progress</div>
<div class="t" style="left:1262.5px;top:449.7px;font-size:24px;color:#626262;letter-spacing:0.45px;">15/06/2018</div>
<div class="t" style="left:1462.5px;top:449.7px;font-size:24px;color:#626262;letter-spacing:0.45px;">15/06/2018</div>
<div class="t" style="left:1662.5px;top:449.7px;font-size:24px;color:#626262;">1</div>
<div class="t" style="left:1828.5px;width:120px;text-align:center;top:449.7px;font-size:24px;color:#626262;">0</div>
<div style="position:absolute;left:0px;top:540px;width:1918px;height:2px;background:#e6e6e6;"></div>
<div class="t" style="left:21px;top:503.7px;font-size:24px;color:#626262;">4</div>
<div class="t" style="left:182px;top:503.7px;font-size:24px;color:#626262;">10</div>
<svg style="position:absolute;left:270px;top:509px" width="20" height="12"><path d="M0 0.5h20L10 11.5z" fill="#5b9ee0"/></svg>
<svg style="position:absolute;left:304px;top:499px" width="38" height="29"><path d="M3 24V5.5Q3 3 5.5 3H12Q14.5 3 15 5.5Q15.5 8 18 8H26Q29 8 29 11V14 M3.5 25.5L10 16.5Q11.5 14.5 14 14.5H33.5Q36.5 14.5 34.5 17L28.5 24.5Q27 26 24.5 26H5Q3 26 3 24" fill="none" stroke="#5b9ee0" stroke-width="3" stroke-linejoin="round" stroke-linecap="round"/></svg>
<div class="t" style="left:351px;top:503.7px;font-size:24px;color:#3a3a3a;font-weight:700;">Campaign Creation ...</div>
<div class="t" style="left:862px;top:503.7px;font-size:24px;color:#626262;">New</div>
<div class="t" style="left:1262.5px;top:503.7px;font-size:24px;color:#626262;letter-spacing:0.45px;">26/06/2018</div>
<div class="t" style="left:1462.5px;top:503.7px;font-size:24px;color:#626262;letter-spacing:0.45px;">20/07/2018</div>
<div class="t" style="left:1662.5px;top:503.7px;font-size:24px;color:#626262;">19</div>
<div class="t" style="left:1828.5px;width:120px;text-align:center;top:503.7px;font-size:24px;color:#626262;">16.95</div>
<div style="position:absolute;left:0px;top:594px;width:1918px;height:2px;background:#e6e6e6;"></div>
<div class="t" style="left:21px;top:557.7px;font-size:24px;color:#626262;">4.1</div>
<div class="t" style="left:182px;top:557.7px;font-size:24px;color:#626262;">11</div>
<div style="position:absolute;left:360px;top:562px;width:12px;height:12px;background:#bdbdbd;border-radius:50%;"></div>
<div class="t" style="left:395px;top:557.7px;font-size:24px;color:#626262;">Brainstorming</div>
<svg style="position:absolute;left:656px;top:550px" width="40" height="40"><use href="#avB"/></svg>
<div class="t" style="left:862px;top:557.7px;font-size:24px;color:#626262;">To Review by...</div>
<div class="t" style="left:1262.5px;top:557.7px;font-size:24px;color:#626262;letter-spacing:0.45px;">26/06/2018</div>
<div class="t" style="left:1462.5px;top:557.7px;font-size:24px;color:#626262;letter-spacing:0.45px;">03/07/2018</div>
<div class="t" style="left:1662.5px;top:557.7px;font-size:24px;color:#626262;">6</div>
<div class="t" style="left:1828.5px;width:120px;text-align:center;top:557.7px;font-size:24px;color:#626262;">20</div>
<div style="position:absolute;left:0px;top:648px;width:1918px;height:2px;background:#e6e6e6;"></div>
<div class="t" style="left:21px;top:611.7px;font-size:24px;color:#626262;">4.2</div>
<div class="t" style="left:182px;top:611.7px;font-size:24px;color:#626262;">12</div>
<div style="position:absolute;left:360px;top:616px;width:12px;height:12px;background:#bdbdbd;border-radius:50%;"></div>
<div class="t" style="left:395px;top:611.7px;font-size:24px;color:#626262;">Creation</div>
<svg style="position:absolute;left:656px;top:604px" width="40" height="40"><use href="#avC"/></svg>
<div class="t" style="left:862px;top:611.7px;font-size:24px;color:#626262;">In Progress</div>
<div class="t" style="left:1262.5px;top:611.7px;font-size:24px;color:#626262;letter-spacing:0.45px;">03/07/2018</div>
<div class="t" style="left:1462.5px;top:611.7px;font-size:24px;color:#626262;letter-spacing:0.45px;">10/07/2018</div>
<div class="t" style="left:1662.5px;top:611.7px;font-size:24px;color:#626262;">6</div>
<div class="t" style="left:1828.5px;width:120px;text-align:center;top:611.7px;font-size:24px;color:#626262;">30</div>
<div style="position:absolute;left:0px;top:702px;width:1918px;height:2px;background:#e6e6e6;"></div>
<div class="t" style="left:21px;top:665.7px;font-size:24px;color:#626262;">4.3</div>
<div class="t" style="left:182px;top:665.7px;font-size:24px;color:#626262;">13</div>
<div style="position:absolute;left:360px;top:670px;width:12px;height:12px;background:#bdbdbd;border-radius:50%;"></div>
<div class="t" style="left:395px;top:665.7px;font-size:24px;color:#626262;">Presentation to To...</div>
<svg style="position:absolute;left:656px;top:658px" width="40" height="40"><use href="#avA"/></svg>
<div class="t" style="left:862px;top:665.7px;font-size:24px;color:#626262;">In Progress</div>
<div class="t" style="left:1262.5px;top:665.7px;font-size:24px;color:#626262;letter-spacing:0.45px;">10/07/2018</div>
<div class="t" style="left:1462.5px;top:665.7px;font-size:24px;color:#626262;letter-spacing:0.45px;">13/07/2018</div>
<div class="t" style="left:1662.5px;top:665.7px;font-size:24px;color:#626262;">4</div>
<div class="t" style="left:1828.5px;width:120px;text-align:center;top:665.7px;font-size:24px;color:#626262;">0</div>
<div style="position:absolute;left:0px;top:756px;width:1918px;height:2px;background:#e6e6e6;"></div>
<div class="t" style="left:21px;top:719.7px;font-size:24px;color:#626262;">4.4</div>
<div class="t" style="left:182px;top:719.7px;font-size:24px;color:#626262;">14</div>
<div style="position:absolute;left:360px;top:724px;width:12px;height:12px;background:#bdbdbd;border-radius:50%;"></div>
<div class="t" style="left:395px;top:719.7px;font-size:24px;color:#626262;">Meeting and Assign...</div>
<svg style="position:absolute;left:656px;top:712px" width="40" height="40"><use href="#avA"/></svg>
<div class="t" style="left:862px;top:719.7px;font-size:24px;color:#626262;">In Progress</div>
<div class="t" style="left:1262.5px;top:719.7px;font-size:24px;color:#626262;letter-spacing:0.45px;">13/07/2018</div>
<div class="t" style="left:1462.5px;top:719.7px;font-size:24px;color:#626262;letter-spacing:0.45px;">20/07/2018</div>
<div class="t" style="left:1662.5px;top:719.7px;font-size:24px;color:#626262;">6</div>
<div class="t" style="left:1828.5px;width:120px;text-align:center;top:719.7px;font-size:24px;color:#626262;">10</div>
<div style="position:absolute;left:0px;top:810px;width:1918px;height:2px;background:#e6e6e6;"></div>
<div class="t" style="left:21px;top:773.7px;font-size:24px;color:#626262;">4.5</div>
<div class="t" style="left:182px;top:773.7px;font-size:24px;color:#626262;">15</div>
<div style="position:absolute;left:360px;top:778px;width:12px;height:12px;background:#bdbdbd;border-radius:50%;"></div>
<div class="t" style="left:395px;top:773.7px;font-size:24px;color:#626262;">Ongoing Weekly St...</div>
<svg style="position:absolute;left:656px;top:766px" width="40" height="40"><use href="#avA"/></svg>
<div class="t" style="left:862px;top:773.7px;font-size:24px;color:#626262;">In Progress</div>
<div class="t" style="left:1262.5px;top:773.7px;font-size:24px;color:#626262;letter-spacing:0.45px;">10/07/2018</div>
<div class="t" style="left:1462.5px;top:773.7px;font-size:24px;color:#626262;letter-spacing:0.45px;">12/07/2018</div>
<div class="t" style="left:1662.5px;top:773.7px;font-size:24px;color:#626262;">3</div>
<div class="t" style="left:1828.5px;width:120px;text-align:center;top:773.7px;font-size:24px;color:#626262;">20</div>
<div style="position:absolute;left:0px;top:864px;width:1918px;height:2px;background:#e6e6e6;"></div>
<div class="t" style="left:21px;top:827.7px;font-size:24px;color:#626262;">5</div>
<div class="t" style="left:182px;top:827.7px;font-size:24px;color:#626262;">16</div>
<svg style="position:absolute;left:270px;top:833px" width="20" height="12"><path d="M0 0.5h20L10 11.5z" fill="#5b9ee0"/></svg>
<svg style="position:absolute;left:304px;top:823px" width="38" height="29"><path d="M3 24V5.5Q3 3 5.5 3H12Q14.5 3 15 5.5Q15.5 8 18 8H26Q29 8 29 11V14 M3.5 25.5L10 16.5Q11.5 14.5 14 14.5H33.5Q36.5 14.5 34.5 17L28.5 24.5Q27 26 24.5 26H5Q3 26 3 24" fill="none" stroke="#5b9ee0" stroke-width="3" stroke-linejoin="round" stroke-linecap="round"/></svg>
<div class="t" style="left:351px;top:827.7px;font-size:24px;color:#3a3a3a;font-weight:700;">Advertising: Print</div>
<svg style="position:absolute;left:656px;top:820px" width="40" height="40"><use href="#avD"/></svg>
<div class="t" style="left:862px;top:827.7px;font-size:24px;color:#626262;">New Request</div>
<div class="t" style="left:1262.5px;top:827.7px;font-size:24px;color:#626262;letter-spacing:0.45px;">20/07/2018</div>
<div class="t" style="left:1462.5px;top:827.7px;font-size:24px;color:#626262;letter-spacing:0.45px;">29/08/2018</div>
<div class="t" style="left:1662.5px;top:827.7px;font-size:24px;color:#626262;">28</div>
<div class="t" style="left:1828.5px;width:120px;text-align:center;top:827.7px;font-size:24px;color:#626262;">6.19</div>
<div style="position:absolute;left:0px;top:918px;width:1918px;height:2px;background:#e6e6e6;"></div>
<div class="t" style="left:21px;top:881.7px;font-size:24px;color:#626262;">5.1</div>
<div class="t" style="left:182px;top:881.7px;font-size:24px;color:#626262;">17</div>
<div style="position:absolute;left:360px;top:886px;width:12px;height:12px;background:#bdbdbd;border-radius:50%;"></div>
<div class="t" style="left:395px;top:881.7px;font-size:24px;color:#626262;">Create Media Plan (...</div>
<svg style="position:absolute;left:656px;top:874px" width="40" height="40"><use href="#avC"/></svg>
<div class="t" style="left:862px;top:881.7px;font-size:24px;color:#626262;">Review Requ...</div>
<div class="t" style="left:1262.5px;top:881.7px;font-size:24px;color:#626262;letter-spacing:0.45px;">20/07/2018</div>
<div class="t" style="left:1462.5px;top:881.7px;font-size:24px;color:#626262;letter-spacing:0.45px;">27/07/2018</div>
<div class="t" style="left:1662.5px;top:881.7px;font-size:24px;color:#626262;">5</div>
<div class="t" style="left:1828.5px;width:120px;text-align:center;top:881.7px;font-size:24px;color:#626262;">0</div>
<div style="position:absolute;left:0px;top:972px;width:1918px;height:2px;background:#e6e6e6;"></div>
<div class="t" style="left:21px;top:935.7px;font-size:24px;color:#626262;">5.2</div>
<div class="t" style="left:182px;top:935.7px;font-size:24px;color:#626262;">18</div>
<div style="position:absolute;left:360px;top:940px;width:12px;height:12px;background:#bdbdbd;border-radius:50%;"></div>
<div class="t" style="left:395px;top:935.7px;font-size:24px;color:#626262;">Buy Print Media</div>
<svg style="position:absolute;left:656px;top:928px" width="40" height="40"><use href="#avD"/></svg>
<div class="t" style="left:862px;top:935.7px;font-size:24px;color:#626262;">New Request</div>
<div class="t" style="left:1262.5px;top:935.7px;font-size:24px;color:#626262;letter-spacing:0.45px;">27/07/2018</div>
<div class="t" style="left:1462.5px;top:935.7px;font-size:24px;color:#626262;letter-spacing:0.45px;">03/08/2018</div>
<div class="t" style="left:1662.5px;top:935.7px;font-size:24px;color:#626262;">6</div>
<div class="t" style="left:1828.5px;width:120px;text-align:center;top:935.7px;font-size:24px;color:#626262;">10</div>
<div style="position:absolute;left:0px;top:1026px;width:1918px;height:2px;background:#e6e6e6;"></div>
<div class="t" style="left:21px;top:989.7px;font-size:24px;color:#626262;">5.3</div>
<div class="t" style="left:182px;top:989.7px;font-size:24px;color:#626262;">19</div>
<div style="position:absolute;left:360px;top:994px;width:12px;height:12px;background:#bdbdbd;border-radius:50%;"></div>
<div class="t" style="left:395px;top:989.7px;font-size:24px;color:#626262;">Design</div>
<div class="t" style="left:862px;top:989.7px;font-size:24px;color:#626262;">New</div>
<div class="t" style="left:1262.5px;top:989.7px;font-size:24px;color:#626262;letter-spacing:0.45px;">03/08/2018</div>
<div class="t" style="left:1462.5px;top:989.7px;font-size:24px;color:#626262;letter-spacing:0.45px;">14/08/2018</div>
<div class="t" style="left:1662.5px;top:989.7px;font-size:24px;color:#626262;">8</div>
<div class="t" style="left:1828.5px;width:120px;text-align:center;top:989.7px;font-size:24px;color:#626262;">0</div>
<div style="position:absolute;left:0px;top:1080px;width:1918px;height:2px;background:#e6e6e6;"></div>
<div class="t" style="left:21px;top:1043.7px;font-size:24px;color:#626262;">5.4</div>
<div class="t" style="left:182px;top:1043.7px;font-size:24px;color:#626262;">20</div>
<div style="position:absolute;left:360px;top:1048px;width:12px;height:12px;background:#bdbdbd;border-radius:50%;"></div>
<div class="t" style="left:395px;top:1043.7px;font-size:24px;color:#626262;">Photography and/o...</div>
<div class="t" style="left:862px;top:1043.7px;font-size:24px;color:#626262;">To Review by...</div>
<div class="t" style="left:1062px;top:1043.7px;font-size:24px;color:#626262;">Please set Cli...</div>
<div class="t" style="left:1262.5px;top:1043.7px;font-size:24px;color:#626262;letter-spacing:0.45px;">27/07/2018</div>
<div class="t" style="left:1462.5px;top:1043.7px;font-size:24px;color:#626262;letter-spacing:0.45px;">10/08/2018</div>
<div class="t" style="left:1662.5px;top:1043.7px;font-size:24px;color:#626262;">10</div>
<div class="t" style="left:1828.5px;width:120px;text-align:center;top:1043.7px;font-size:24px;color:#626262;">20</div>
<div style="position:absolute;left:0px;top:1134px;width:1918px;height:2px;background:#e6e6e6;"></div>
<div class="t" style="left:21px;top:1097.7px;font-size:24px;color:#626262;">5.5</div>
<div class="t" style="left:182px;top:1097.7px;font-size:24px;color:#626262;">21</div>
<div style="position:absolute;left:360px;top:1102px;width:12px;height:12px;background:#bdbdbd;border-radius:50%;"></div>
<div class="t" style="left:395px;top:1097.7px;font-size:24px;color:#626262;">Production</div>
<div class="t" style="left:862px;top:1097.7px;font-size:24px;color:#626262;">New Request</div>
<div class="t" style="left:1262.5px;top:1097.7px;font-size:24px;color:#626262;letter-spacing:0.45px;">10/08/2018</div>
<div class="t" style="left:1462.5px;top:1097.7px;font-size:24px;color:#626262;letter-spacing:0.45px;">15/08/2018</div>
<div class="t" style="left:1662.5px;top:1097.7px;font-size:24px;color:#626262;">4</div>
<div class="t" style="left:1828.5px;width:120px;text-align:center;top:1097.7px;font-size:24px;color:#626262;">5</div>
</div>
<div style="position:absolute;left:221px;top:493px;width:2px;height:1120px;background:#e6e6e6;"></div>
<div style="position:absolute;left:1931px;top:401px;width:116px;height:90px;overflow:hidden;">
<div class="t" style="left:6.5px;width:160px;text-align:center;top:33.7px;font-size:24px;color:#34495e;">%Done</div>
</div>
<div style="position:absolute;left:2047px;top:401px;width:24px;height:1212px;background:#f4f6f6;box-sizing:border-box;border-left:2px solid #e8eaea;border-right:2px solid #e8eaea;"></div>
<div style="position:absolute;left:779px;top:963px;width:240px;height:110px;background:#000;border-radius:8px;"></div>
<svg style="position:absolute;left:806px;top:1071px;" width="28" height="20" viewBox="0 0 28 20"><path d="M0 0h27L9 19z" fill="#000"/></svg>
<div class="t" style="left:800px;top:984.7px;font-size:24px;color:#fff;font-weight:700;">Fred</div>
<div class="t" style="left:800px;top:1028.7px;font-size:24px;color:#fff;">Creative</div>
<svg style="position:absolute;left:2071px;top:401px" width="751" height="1212" viewBox="2071 401 751 1212"><defs><filter id="sh" x="-20%" y="-20%" width="150%" height="150%"><feDropShadow dx="1.5" dy="2" stdDeviation="1.5" flood-color="#000" flood-opacity="0.22"/></filter></defs><rect x="2071" y="445" width="751" height="2" fill="#e6e6e6"/><rect x="2071" y="491" width="751" height="2" fill="#e6e6e6"/><rect x="2173" y="447" width="2" height="44" fill="#e6e6e6"/><rect x="2359" y="447" width="2" height="44" fill="#e6e6e6"/><rect x="2545" y="447" width="2" height="44" fill="#e6e6e6"/><rect x="2731" y="447" width="2" height="44" fill="#e6e6e6"/><text x="2452.5" y="430.5" font-family="Liberation Sans" font-size="22" fill="#34495e" text-anchor="middle">2018</text><text x="2081" y="477.5" font-family="Liberation Sans" font-size="23" fill="#34495e" text-anchor="middle">May 2018</text><text x="2267" y="477.5" font-family="Liberation Sans" font-size="23" fill="#34495e" text-anchor="middle">Jun 2018</text><text x="2453" y="477.5" font-family="Liberation Sans" font-size="23" fill="#34495e" text-anchor="middle">Jul 2018</text><text x="2639" y="477.5" font-family="Liberation Sans" font-size="23" fill="#34495e" text-anchor="middle">Aug 2018</text><text x="2825" y="477.5" font-family="Liberation Sans" font-size="23" fill="#34495e" text-anchor="middle">Sep 2018</text><rect x="2071" y="547" width="751" height="2" fill="#e6e6e6"/><rect x="2071" y="601" width="751" height="2" fill="#e6e6e6"/><rect x="2071" y="655" width="751" height="2" fill="#e6e6e6"/><rect x="2071" y="709" width="751" height="2" fill="#e6e6e6"/><rect x="2071" y="763" width="751" height="2" fill="#e6e6e6"/><rect x="2071" y="817" width="751" height="2" fill="#e6e6e6"/><rect x="2071" y="871" width="751" height="2" fill="#e6e6e6"/><rect x="2071" y="925" width="751" height="2" fill="#e6e6e6"/><rect x="2071" y="979" width="751" height="2" fill="#e6e6e6"/><rect x="2071" y="1033" width="751" height="2" fill="#e6e6e6"/><rect x="2071" y="1087" width="751" height="2" fill="#e6e6e6"/><rect x="2071" y="1141" width="751" height="2" fill="#e6e6e6"/><rect x="2071" y="1195" width="751" height="2" fill="#e6e6e6"/><rect x="2071" y="1249" width="751" height="2" fill="#e6e6e6"/><rect x="2071" y="1303" width="751" height="2" fill="#e6e6e6"/><rect x="2071" y="1357" width="751" height="2" fill="#e6e6e6"/><rect x="2071" y="1411" width="751" height="2" fill="#e6e6e6"/><rect x="2071" y="1465" width="751" height="2" fill="#e6e6e6"/><rect x="2071" y="1519" width="751" height="2" fill="#e6e6e6"/><rect x="2071" y="1573" width="751" height="2" fill="#e6e6e6"/><rect x="2071" y="1627" width="751" height="2" fill="#e6e6e6"/><line x1="2565" y1="493" x2="2565" y2="1613" stroke="#999" stroke-width="4" stroke-dasharray="12 8"/><g filter="url(#sh)"><path d="M2542 488.5L2534.2 480.5A11 11 0 1 1 2549.8 480.5z" fill="#f5333f"/><circle cx="2542" cy="473" r="6.3" fill="#fff"/></g><rect x="2147" y="503" width="204" height="22" fill="#26a69a" filter="url(#sh)"/><path d="M2147 525h15.5L2147 540.5z" fill="#ffa726"/><path d="M2351 525h-15.5L2351 540.5z" fill="#ffa726"/><clipPath id="c1"><rect x="2147" y="555" width="44" height="40" rx="7"/></clipPath><rect x="2147" y="555" width="44" height="40" rx="7" fill="#26a69a" filter="url(#sh)"/><text x="2154" y="585" font-family="Liberation Sans" font-size="20" fill="#fff" fill-opacity="0.92">0%</text><clipPath id="c2"><rect x="2281" y="609" width="38" height="40" rx="7"/></clipPath><rect x="2281" y="609" width="38" height="40" rx="7" fill="#26a69a" filter="url(#sh)"/><text x="2288" y="639" font-family="Liberation Sans" font-size="20" fill="#fff" fill-opacity="0.92">0%</text><clipPath id="c3"><rect x="2281" y="663" width="70" height="40" rx="7"/></clipPath><rect x="2281" y="663" width="70" height="40" rx="7" fill="#26a69a" filter="url(#sh)"/><text x="2288" y="693" font-family="Liberation Sans" font-size="20" fill="#fff" fill-opacity="0.92">0%</text><clipPath id="c4"><rect x="2281" y="717" width="8" height="40" rx="4"/></clipPath><rect x="2281" y="717" width="8" height="40" rx="4" fill="#26a69a" filter="url(#sh)"/><text x="2288" y="747" font-family="Liberation Sans" font-size="20" fill="#fff" fill-opacity="0.92">0%</text><clipPath id="c5"><rect x="2281" y="771" width="38" height="40" rx="7"/></clipPath><rect x="2281" y="771" width="38" height="40" rx="7" fill="#26a69a" filter="url(#sh)"/><text x="2288" y="801" font-family="Liberation Sans" font-size="20" fill="#fff" fill-opacity="0.92">0%</text><clipPath id="c6"><rect x="2281" y="825" width="44" height="40" rx="7"/></clipPath><rect x="2281" y="825" width="44" height="40" rx="7" fill="#dce775" filter="url(#sh)"/><text x="2288" y="855" font-family="Liberation Sans" font-size="20" fill="#fff" fill-opacity="0.92">0%</text><clipPath id="c7"><rect x="2281" y="879" width="44" height="40" rx="7"/></clipPath><rect x="2281" y="879" width="44" height="40" rx="7" fill="#26a69a" filter="url(#sh)"/><text x="2288" y="909" font-family="Liberation Sans" font-size="20" fill="#fff" fill-opacity="0.92">0%</text><clipPath id="c8"><rect x="2281" y="933" width="8" height="40" rx="4"/></clipPath><rect x="2281" y="933" width="8" height="40" rx="4" fill="#26a69a" filter="url(#sh)"/><text x="2288" y="963" font-family="Liberation Sans" font-size="20" fill="#fff" fill-opacity="0.92">0%</text><rect x="2351" y="989" width="150" height="22" fill="#9ccc65" filter="url(#sh)"/><path d="M2356 989H2377V1011H2356Q2351 1011 2351 1006V994Q2351 989 2356 989z" fill="#ffa726"/><path d="M2351 1011h15.5L2351 1026.5z" fill="#ffa726"/><path d="M2501 1011h-15.5L2501 1026.5z" fill="#ffa726"/><clipPath id="c10"><rect x="2351" y="1041" width="44" height="40" rx="7"/></clipPath><rect x="2351" y="1041" width="44" height="40" rx="7" fill="#0d47a1" filter="url(#sh)"/><rect x="2351" y="1041" width="8" height="40" fill="#01579b" clip-path="url(#c10)"/><text x="2358" y="1071" font-family="Liberation Sans" font-size="20" fill="#fff" fill-opacity="0.92">20%</text><clipPath id="c11"><rect x="2395" y="1095" width="42" height="40" rx="7"/></clipPath><rect x="2395" y="1095" width="42" height="40" rx="7" fill="#26a69a" filter="url(#sh)"/><rect x="2395" y="1095" width="12" height="40" fill="#01579b" clip-path="url(#c11)"/><text x="2402" y="1125" font-family="Liberation Sans" font-size="20" fill="#fff" fill-opacity="0.92">30%</text><clipPath id="c12"><rect x="2437" y="1149" width="20.5" height="40" rx="9"/></clipPath><rect x="2437" y="1149" width="20.5" height="40" rx="9" fill="#26a69a" filter="url(#sh)"/><text x="2444" y="1179" font-family="Liberation Sans" font-size="20" fill="#fff" fill-opacity="0.92">0%</text><clipPath id="c13"><rect x="2457" y="1203" width="44" height="40" rx="7"/></clipPath><rect x="2457" y="1203" width="44" height="40" rx="7" fill="#26a69a" filter="url(#sh)"/><rect x="2457" y="1203" width="4" height="40" fill="#01579b" clip-path="url(#c13)"/><text x="2464" y="1233" font-family="Liberation Sans" font-size="20" fill="#fff" fill-opacity="0.92">10%</text><clipPath id="c14"><rect x="2437" y="1257" width="14" height="40" rx="7"/></clipPath><rect x="2437" y="1257" width="14" height="40" rx="7" fill="#26a69a" filter="url(#sh)"/><rect x="2437" y="1257" width="4" height="40" fill="#01579b" clip-path="url(#c14)"/><text x="2444" y="1287" font-family="Liberation Sans" font-size="20" fill="#fff" fill-opacity="0.92">20%</text><rect x="2501" y="1313" width="240" height="22" fill="#2e7d32" filter="url(#sh)"/><path d="M2506 1313H2515V1335H2506Q2501 1335 2501 1330V1318Q2501 1313 2506 1313z" fill="#ffa726"/><path d="M2501 1335h15.5L2501 1350.5z" fill="#ffa726"/><path d="M2741 1335h-15.5L2741 1350.5z" fill="#ffa726"/><clipPath id="c16"><rect x="2501" y="1365" width="36" height="40" rx="7"/></clipPath><rect x="2501" y="1365" width="36" height="40" rx="7" fill="#64b5f6" filter="url(#sh)"/><text x="2508" y="1395" font-family="Liberation Sans" font-size="20" fill="#fff" fill-opacity="0.92">0%</text><clipPath id="c17"><rect x="2537" y="1419" width="44" height="40" rx="7"/></clipPath><rect x="2537" y="1419" width="44" height="40" rx="7" fill="#2e7d32" filter="url(#sh)"/><rect x="2537" y="1419" width="6" height="40" fill="#01579b" clip-path="url(#c17)"/><text x="2544" y="1449" font-family="Liberation Sans" font-size="20" fill="#fff" fill-opacity="0.92">10%</text><clipPath id="c18"><rect x="2581" y="1473" width="68" height="40" rx="7"/></clipPath><rect x="2581" y="1473" width="68" height="40" rx="7" fill="#9ccc65" filter="url(#sh)"/><text x="2588" y="1503" font-family="Liberation Sans" font-size="20" fill="#fff" fill-opacity="0.92">0%</text><clipPath id="c19"><rect x="2537" y="1527" width="84" height="40" rx="7"/></clipPath><rect x="2537" y="1527" width="84" height="40" rx="7" fill="#0d47a1" filter="url(#sh)"/><rect x="2537" y="1527" width="18" height="40" fill="#01579b" clip-path="url(#c19)"/><text x="2544" y="1557" font-family="Liberation Sans" font-size="20" fill="#fff" fill-opacity="0.92">20%</text><clipPath id="c20"><rect x="2621" y="1581" width="32" height="40" rx="7"/></clipPath><rect x="2621" y="1581" width="32" height="40" rx="7" fill="#2e7d32" filter="url(#sh)"/><rect x="2621" y="1581" width="2" height="40" fill="#01579b" clip-path="url(#c20)"/><text x="2628" y="1611" font-family="Liberation Sans" font-size="20" fill="#fff" fill-opacity="0.92">5%</text><path d="M2351 513.5 L2362 513.5 L2362 988" fill="none" stroke="#777" stroke-width="2"/><path d="M2354.2 973H2369.8L2362 988z" fill="#777"/><path d="M2501 999.5 L2512 999.5 L2512 1312" fill="none" stroke="#777" stroke-width="2"/><path d="M2504.2 1297H2519.8L2512 1312z" fill="#777"/><path d="M2395 1063.5 L2406 1063.5 L2406 1094" fill="none" stroke="#777" stroke-width="2"/><path d="M2398.2 1079H2413.8L2406 1094z" fill="#777"/><path d="M2437 1117.5 L2449 1117.5 L2449 1149" fill="none" stroke="#777" stroke-width="2"/><path d="M2441.2 1134H2456.8L2449 1149z" fill="#777"/><path d="M2457.5 1171.5 L2468 1171.5 L2468 1202" fill="none" stroke="#777" stroke-width="2"/><path d="M2460.2 1187H2475.8L2468 1202z" fill="#777"/><path d="M2448 1189 L2448 1256" fill="none" stroke="#777" stroke-width="2"/><path d="M2440.2 1241H2455.8L2448 1256z" fill="#777"/><path d="M2537 1387.5 L2548 1387.5 L2548 1419" fill="none" stroke="#777" stroke-width="2"/><path d="M2540.2 1404H2555.8L2548 1419z" fill="#777"/><path d="M2581 1441.5 L2593 1441.5 L2593 1472" fill="none" stroke="#777" stroke-width="2"/><path d="M2585.2 1457H2600.8L2593 1472z" fill="#777"/><path d="M2548 1458 L2548 1526" fill="none" stroke="#777" stroke-width="2"/><path d="M2540.2 1511H2555.8L2548 1526z" fill="#777"/><path d="M2621 1550 L2632 1550 L2632 1580" fill="none" stroke="#777" stroke-width="2"/><path d="M2624.2 1565H2639.8L2632 1580z" fill="#777"/><path d="M2653 1603 L2664 1603 L2664 1640" fill="none" stroke="#777" stroke-width="2"/></svg>
<svg style="position:absolute;left:2679px;top:25px" width="60" height="60" viewBox="-1.5 -1.5 43 43"><circle cx="20" cy="20" r="20.5" fill="#a4d8d3" stroke="#c2c2c2" stroke-width="1.6"/><use href="#avB" x="0" y="0" width="40" height="40"/></svg>
<div class="t" style="left:2757px;top:38.2px;font-size:27.5px;color:#bcd3ec;">Arthur</div>
</body></html>
